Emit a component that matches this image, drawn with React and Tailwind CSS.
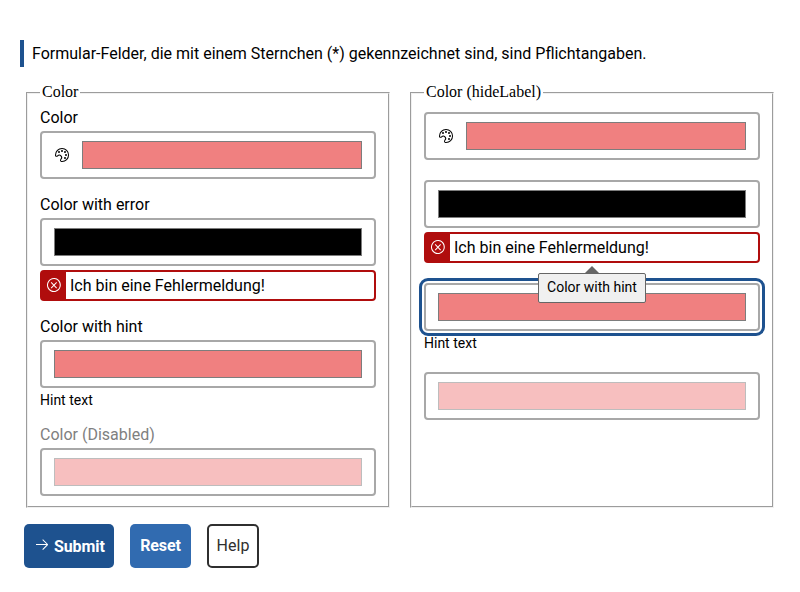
import { VscSymbolColor, VscError, VscArrowRight } from "react-icons/vsc";

function Swatch({ color = "bg-[#f08080]", icon, disabled, focused }) {
  return (
    <div
      className={`flex h-12 items-center rounded-[4px] border-2 border-[#a8a8a8] bg-white px-3 ${
        focused ? "outline-[3px] outline-offset-2 outline-[#1e528f]" : ""
      }`}
    >
      {icon && <VscSymbolColor className="mr-3 h-4 w-4 shrink-0" />}
      <div className={`h-7 flex-1 border border-[#7d7d7d] ${color} ${disabled ? "opacity-50" : ""}`} />
    </div>
  );
}

function Label({ children, disabled }) {
  return <div className={`h-6 pt-px leading-5 ${disabled ? "text-[#808080]" : ""}`}>{children}</div>;
}

function ErrorMessage() {
  return (
    <div className="mt-1 flex h-[31px] rounded-[4px] border-2 border-[#b00d0d] bg-[#b00d0d]">
      <div className="flex w-6 items-start justify-center pt-[5px] text-white">
        <VscError className="h-4 w-4" />
      </div>
      <div className="flex flex-1 items-center rounded-r-[2px] bg-white pl-1 leading-5">Ich bin eine Fehlermeldung!</div>
    </div>
  );
}

function Group({ title, children }) {
  return (
    <fieldset className="h-[425px] w-[364px] border-2 border-[#f0f0f0] px-3 [border-style:groove]">
      <legend className="h-5 px-0.5 font-['Liberation_Serif',serif] leading-[18px]">{title}</legend>
      {children}
    </fieldset>
  );
}

export default function App() {
  return (
    <main className="h-[592px] w-[800px] overflow-hidden bg-white pt-10 pl-5 font-[Roboto,sans-serif] text-base text-black">
      <p className="h-[27px] border-l-4 border-[#1e528f] pl-2 leading-[27px]">
        Formular-Felder, die mit einem Sternchen (*) gekennzeichnet sind, sind Pflichtangaben.
      </p>
      <div className="mt-4 flex gap-5 pl-1.5">
        <Group title="Color">
          <div className="pt-1">
            <Label>Color</Label>
            <Swatch icon />
          </div>
          <div className="mt-[15px]">
            <Label>Color with error</Label>
            <Swatch color="bg-black" />
            <ErrorMessage />
          </div>
          <div className="mt-[15px]">
            <Label>Color with hint</Label>
            <Swatch />
            <div className="mt-1 h-4 text-sm leading-4">Hint text</div>
          </div>
          <div className="mt-4">
            <Label disabled>Color (Disabled)</Label>
            <Swatch disabled />
          </div>
        </Group>
        <Group title="Color (hideLabel)">
          <div className="pt-[9px]">
            <Swatch icon />
          </div>
          <div className="mt-5">
            <Swatch color="bg-black" />
            <ErrorMessage />
          </div>
          <div className="relative mt-5">
            <Swatch focused />
            <div className="absolute -top-[10px] left-[114px] h-[30px] w-[108px] rounded-[2px] border border-[#666] bg-[#f0f0f0] text-center text-sm leading-[27px]">
              <svg className="absolute -top-2 left-[45px] h-2 w-4" viewBox="0 0 16 8">
                <path d="M0 8L8 0l8 8z" fill="#666" />
              </svg>
              Color with hint
            </div>
            <div className="mt-1 h-4 text-sm leading-4">Hint text</div>
          </div>
          <div className="mt-[21px]">
            <Swatch disabled />
          </div>
        </Group>
      </div>
      <div className="mt-4 flex gap-4 pl-1">
        <button className="flex h-11 w-[90px] items-center gap-1 rounded-[5px] bg-[#1e528f] pl-[10px] font-bold text-white">
          <VscArrowRight className="mb-1 h-4 w-4" />
          <span className="pt-px tracking-[-0.1px]">Submit</span>
        </button>
        <button className="h-11 w-[61px] rounded-[5px] bg-[#316bb0] font-bold tracking-[-0.1px] text-white">Reset</button>
        <button className="h-11 w-[52px] rounded-[5px] border-2 border-[#2f2f2f] bg-white text-[#2f2f2f]">Help</button>
      </div>
    </main>
  );
}
